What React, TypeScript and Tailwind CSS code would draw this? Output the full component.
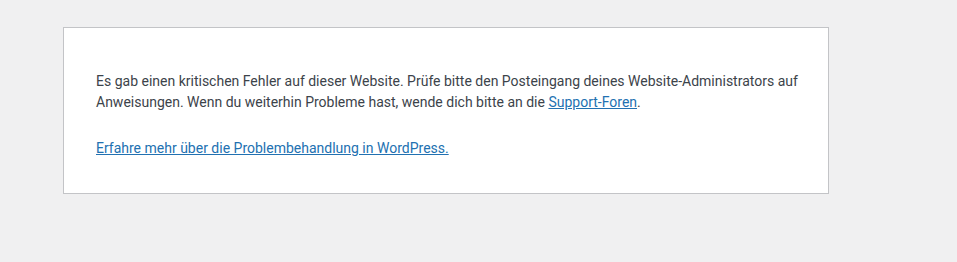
export default function App() {
  return (
    <div className="min-h-[262px] bg-[#f0f0f1] pt-[27px] pl-[63px] font-['Roboto',sans-serif] text-[14px] leading-[1.5] text-[#3c434a]">
      <div className="w-[766px] border border-[#c3c4c7] bg-white px-8 py-[14px]">
        <p className="-mr-2 mt-[29px] mb-5">
          Es gab einen kritischen Fehler auf dieser Website. Prüfe bitte den Posteingang deines Website-Administrators auf
          Anweisungen. Wenn du weiterhin Probleme hast, wende dich bitte an die{" "}
          <a href="#" className="text-[#2271b1] underline">
            Support-Foren
          </a>
          .
        </p>
        <p className="mt-[25px] mb-5">
          <a href="#" className="text-[#2271b1] underline">
            Erfahre mehr über die Problembehandlung in WordPress.
          </a>
        </p>
      </div>
    </div>
  )
}
